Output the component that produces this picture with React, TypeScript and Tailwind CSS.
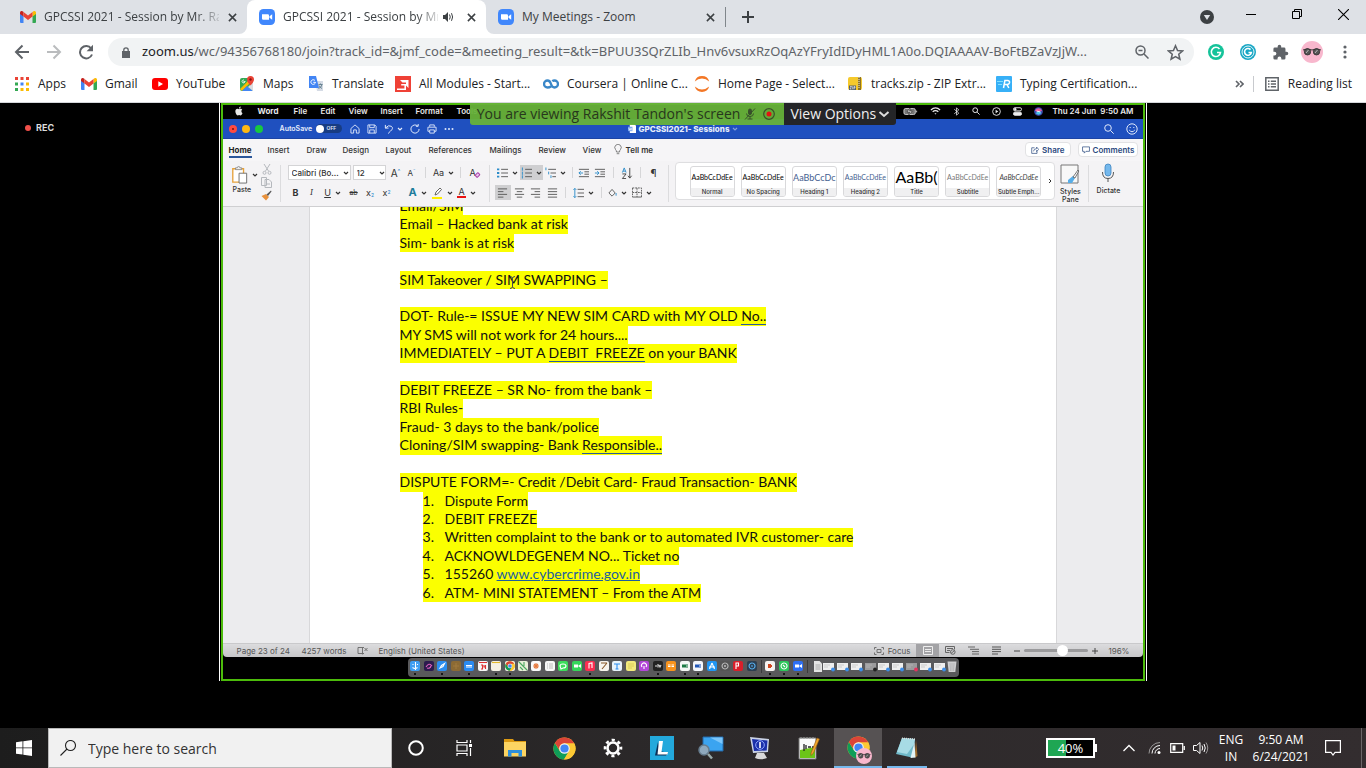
import React from "react";

type P = { children?: React.ReactNode; className?: string };

/* ---------- shared drawings ---------- */

const Gmail = ({ className = "" }: P) => (
  <svg viewBox="0 0 16 12" className={className}>
    <path d="M0 2v9a1 1 0 0 0 1 1h2.500V5z" fill="#4285f4" />
    <path d="M16 2v9a1 1 0 0 1-1 1h-2.500V5z" fill="#34a853" />
    <path d="M12.500 1v4.500L16 3V1.700C16 0 14.200-.5 13 .5z" fill="#fbbc04" />
    <path d="M0 1.700V3l3.500 2.500V1L3 .5C1.800-.5 0 0 0 1.700z" fill="#c5221f" />
    <path d="M3.500 1v4.500L8 9l4.500-3.500V1L8 4.400z" fill="#ea4335" />
  </svg>
);

const ZoomLogo = ({ className = "" }: P) => (
  <svg viewBox="0 0 16 16" className={className}>
    <rect width="16" height="16" rx="4.500" fill="#4087fc" />
    <path d="M3 5.200h5.800a1.200 1.200 0 0 1 1.200 1.200v4.400H4.200A1.200 1.200 0 0 1 3 9.600zM10.500 7.200l2.700-1.900v5.400l-2.700-1.900z" fill="#fff" />
  </svg>
);

const Close = ({ className = "" }: P) => (
  <svg viewBox="0 0 10 10" className={className} stroke="#3c4043" strokeWidth="1.700">
    <path d="M1 1l8 8M9 1l-8 8" />
  </svg>
);

const Chrome = ({ className = "" }: P) => (
  <svg viewBox="0 0 24 24" className={className}>
    <circle cx="12" cy="12" r="11.500" fill="#fbc02d" />
    <path d="M2 6.200A11.500 11.500 0 0 0 11.500 23.500L16.800 14.500 12 12 7.200 14.800z" fill="#0f9d58" />
    <path d="M22 6.300H12v5.700l4.800 2.700-5.300 8.800A11.500 11.500 0 0 0 22 6.300z" fill="#fcc934" />
    <path d="M2 6.200A11.500 11.500 0 0 1 22 6.500H12A5.500 5.500 0 0 0 6.700 13.500z" fill="#db4437" />
    <circle cx="12" cy="12" r="5.500" fill="#f1f1f1" />
    <circle cx="12" cy="12" r="4.300" fill="#4285f4" />
  </svg>
);

const Glasses = ({ className = "" }: P) => (
  <svg viewBox="0 0 22 22" className={className}>
    <circle cx="11" cy="11" r="11" fill="#f8b7cd" />
    <path d="M2 9q4-2 9 0 5-2 9 0" stroke="#333" fill="none" />
    <circle cx="6.500" cy="10.800" r="3.200" fill="#555" stroke="#222" strokeWidth=".7" />
    <circle cx="15.500" cy="10.800" r="3.200" fill="#555" stroke="#222" strokeWidth=".7" />
    <path d="M5 12l2.500-3M14 12l2.500-3" stroke="#bbb" strokeWidth="1" />
  </svg>
);

const Down = ({ className = "" }: P) => (
  <svg viewBox="0 0 6 6" className={`h-[6px] w-[6px] shrink-0 ${className}`} fill="none" stroke="currentColor" strokeWidth="1.200">
    <path d="M1 2l2 2 2-2" />
  </svg>
);

/* ---------- browser ---------- */

function Tab({ icon, title, active, audio, fade }: { icon: React.ReactNode; title: string; active?: boolean; audio?: boolean; fade?: boolean }) {
  return (
    <div className={`relative flex h-[34px] w-[239px] shrink-0 items-center pl-3 pr-[10px] ${active ? "rounded-t-lg bg-white" : ""}`}>
      {active && (
        <>
          <svg viewBox="0 0 8 8" className="absolute -left-2 bottom-0 h-2 w-2"><path d="M8 0v8H0a8 8 0 0 0 8-8z" fill="#fff" /></svg>
          <svg viewBox="0 0 8 8" className="absolute -right-2 bottom-0 h-2 w-2"><path d="M0 0v8h8a8 8 0 0 1-8-8z" fill="#fff" /></svg>
        </>
      )}
      {icon}
      <span className={`ml-2 min-w-0 flex-1 overflow-hidden whitespace-nowrap text-[12px] text-[#3c4043] ${fade ? "[mask-image:linear-gradient(to_right,#000_86%,#0003)]" : ""}`}>{title}</span>
      {audio && (
        <svg viewBox="0 0 12 12" className="ml-1 h-3 w-3 shrink-0" fill="#3c4043">
          <path d="M1 4h2l3-3v10L3 8H1z" />
          <path d="M7.500 3.500q1.500 2.500 0 5M9.500 2.200q2.200 3.800 0 7.600" stroke="#3c4043" fill="none" />
        </svg>
      )}
      <button aria-label="Close tab" className={`flex w-[10px] shrink-0 justify-center ${audio ? "ml-3" : "ml-2"}`}><Close className="h-[9px] w-[9px]" /></button>
    </div>
  );
}

function TabStrip() {
  return (
    <div className="flex h-[34px] shrink-0 items-center bg-[#dee1e6] pl-2">
      <Tab fade icon={<Gmail className="h-3 w-4 shrink-0" />} title="GPCSSI 2021 - Session by Mr. Rak" />
      <Tab fade active audio icon={<ZoomLogo className="h-4 w-4 shrink-0" />} title="GPCSSI 2021 - Session by Mr" />
      <Tab icon={<ZoomLogo className="h-4 w-4 shrink-0" />} title="My Meetings - Zoom" />
      <div className="h-5 w-px bg-[#80868b]" />
      <button aria-label="New tab" className="ml-4">
        <svg viewBox="0 0 12 12" className="h-3 w-3" stroke="#3c4043" strokeWidth="2"><path d="M6 0v12M0 6h12" /></svg>
      </button>
      <div className="flex-1" />
      <svg viewBox="0 0 14 14" className="mr-8 h-[14px] w-[14px]"><circle cx="7" cy="7" r="7" fill="#3c4043" /><path d="M3.800 5h6.400L7 10z" fill="#dee1e6" /></svg>
      <div className="mb-[6px] flex items-center gap-9 pr-[17px]">
        <button aria-label="Minimise"><svg viewBox="0 0 10 10" className="h-[10px] w-[10px]" stroke="#000"><path d="M0 5.500h10" /></svg></button>
        <button aria-label="Restore"><svg viewBox="0 0 10 10" className="h-[10px] w-[10px]" fill="none" stroke="#000"><path d="M.5 2.500h7v7h-7zM2.500 2.500v-2h7v7h-2" /></svg></button>
        <button aria-label="Close window"><svg viewBox="0 0 10 10" className="h-[11px] w-[11px]" stroke="#000"><path d="M0 0l10 10M10 0L0 10" /></svg></button>
      </div>
    </div>
  );
}

function Toolbar() {
  return (
    <div className="flex h-9 shrink-0 items-center bg-white pl-[14px] pr-[19px]">
      <button aria-label="Back" className="w-8">
        <svg viewBox="0 0 16 16" className="h-4 w-4" fill="none" stroke="#5f6368" strokeWidth="2"><path d="M15 8H2M8.500 1.500L2 8l6.500 6.500" /></svg>
      </button>
      <button aria-label="Forward" className="w-8">
        <svg viewBox="0 0 16 16" className="h-4 w-4" fill="none" stroke="#babcbe" strokeWidth="2"><path d="M1 8h13M7.500 1.500L14 8l-6.500 6.500" /></svg>
      </button>
      <button aria-label="Reload" className="w-[30px]">
        <svg viewBox="0 0 16 16" className="h-4 w-4" fill="none" stroke="#5f6368" strokeWidth="2"><path d="M14 10.500A6.200 6.200 0 1 1 13.200 4.500" /><path d="M15 .8v6.400H8.600z" fill="#5f6368" stroke="none" /></svg>
      </button>
      <div className="flex h-7 min-w-0 flex-1 items-center rounded-full bg-[#f1f3f4] pl-[14px] pr-[10px]">
        <svg viewBox="0 0 8 11" className="h-[11px] w-2" fill="#5f6368"><path d="M0 4h8v7H0z" /><path d="M1.800 4.500V3a2.200 2.200 0 0 1 4.400 0v1.500" fill="none" stroke="#5f6368" strokeWidth="1.300" /></svg>
        <div className="ml-3 min-w-0 flex-1 overflow-hidden whitespace-nowrap font-['Noto_Sans',sans-serif] text-[13px] text-[#5f6368]">
          <span className="text-[#202124]">zoom.us</span>/wc/94356768180/join?track_id=&amp;jmf_code=&amp;meeting_result=&amp;tk=BPUU3SQrZLIb_Hnv6vsuxRzOqAzYFryIdIDyHML1A0o.DQIAAAAV-BoFtBZaVzJjW...
        </div>
        <svg viewBox="0 0 14 14" className="mr-[18px] h-[14px] w-[14px] shrink-0" fill="none" stroke="#5f6368" strokeWidth="1.500"><circle cx="5.500" cy="5.500" r="4.500" /><path d="M9 9l4.500 4.500M3.500 5.500h4" /></svg>
        <svg viewBox="0 0 24 24" className="h-[17px] w-[17px] shrink-0" fill="none" stroke="#5f6368" strokeWidth="2.200"><path d="M12 2.500l2.900 6.600 7.100.7-5.400 4.700 1.600 7-6.200-3.700-6.200 3.700 1.600-7L2 9.800l7.100-.7z" /></svg>
      </div>
      <div className="ml-[14px] flex items-center">
        <svg viewBox="0 0 16 16" className="h-4 w-4"><circle cx="8" cy="8" r="8" fill="#15c39a" /><path d="M11.500 5A4.600 4.600 0 1 0 12.500 8.500H9" fill="none" stroke="#fff" strokeWidth="1.600" /></svg>
        <svg viewBox="0 0 16 16" className="ml-4 h-4 w-4"><circle cx="8" cy="8" r="8" fill="#18a6c4" /><circle cx="8" cy="8" r="6" fill="none" stroke="#fff" strokeWidth=".9" /><path d="M10.500 5.600A3.400 3.400 0 1 0 11.300 8.500H8.500" fill="none" stroke="#fff" strokeWidth="1.600" /></svg>
        <svg viewBox="0 0 24 24" className="ml-4 h-[17px] w-[17px]" fill="#5f6368"><path d="M20.500 11H19V7a2 2 0 0 0-2-2h-4V3.500a2.500 2.500 0 0 0-5 0V5H4a2 2 0 0 0-2 2v3.800h1.500a2.700 2.700 0 0 1 0 5.400H2V20a2 2 0 0 0 2 2h3.800v-1.500a2.700 2.700 0 0 1 5.400 0V22H17a2 2 0 0 0 2-2v-4h1.500a2.500 2.500 0 0 0 0-5z" /></svg>
        <Glasses className="ml-3 h-[22px] w-[22px]" />
        <svg viewBox="0 0 4 14" className="ml-5 h-[14px] w-1" fill="#5f6368"><circle cx="2" cy="2" r="1.600" /><circle cx="2" cy="7" r="1.600" /><circle cx="2" cy="12" r="1.600" /></svg>
      </div>
    </div>
  );
}

const bookmarks: { label: string; w: string; icon: React.ReactNode }[] = [
  { label: "Apps", w: "w-[67px]", icon: (
    <svg viewBox="0 0 16 16" className="h-4 w-4"><path d="M1 1h3v3H1zM6.500 1h3v3h-3zM12 1h3v3h-3z" fill="#ea4335" /><path d="M1 6.500h3v3H1z" fill="#34a853" /><path d="M6.500 6.500h3v3h-3z" fill="#4285f4" /><path d="M12 6.500h3v3h-3zM6.500 12h3v3h-3zM12 12h3v3h-3z" fill="#fbbc04" /><path d="M1 12h3v3H1z" fill="#34a853" /></svg>) },
  { label: "Gmail", w: "w-[71px]", icon: <Gmail className="h-3 w-4" /> },
  { label: "YouTube", w: "w-[87px]", icon: (
    <svg viewBox="0 0 16 12" className="h-3 w-4"><rect width="16" height="12" rx="3" fill="#f00" /><path d="M6.300 3.300v5.400L11 6z" fill="#fff" /></svg>) },
  { label: "Maps", w: "w-[69px]", icon: (
    <svg viewBox="0 0 16 16" className="h-4 w-4"><rect x="1" y="2" width="13" height="13" rx="2" fill="#34a853" /><path d="M1 13L12 2h2v2L3 15z" fill="#fbbc04" /><path d="M3 15l5-5 6 5z" fill="#4285f4" /><path d="M9 11l5-5v9z" fill="#dadce0" /><path d="M11.500 0A3.500 3.500 0 0 1 15 3.500C15 6 11.500 9.500 11.500 9.500S8 6 8 3.500A3.500 3.500 0 0 1 11.500 0z" fill="#ea4335" /><circle cx="11.500" cy="3.500" r="1.200" fill="#811" /><path d="M6.500 5.500H4.800v1h.8A1.500 1.500 0 1 1 5 4" stroke="#fff" fill="none" strokeWidth=".8" /></svg>) },
  { label: "Translate", w: "w-[87px]", icon: (
    <svg viewBox="0 0 16 16" className="h-4 w-4"><path d="M7 5h8v10H9z" fill="#d5dbe5" /><path d="M1 0h7l3 12H1z" fill="#4285f4" /><path d="M7 4.600A2.300 2.300 0 1 0 7.500 6.300H5.300" stroke="#fff" fill="none" /><path d="M10.500 8.500h4M12.500 7.500v1M14 8.500q-.5 3-3.500 4M11 9.500q1 2 3 3" stroke="#607d8b" fill="none" strokeWidth=".9" /></svg>) },
  { label: "All Modules - Start...", w: "w-[148px]", icon: (
    <svg viewBox="0 0 16 16" className="h-4 w-4"><path d="M0 0h16v16H0z" fill="#ef4136" /><path d="M2 13.200h8.200V8.800H6.200" fill="none" stroke="#fff" strokeWidth="1.600" /><path d="M5 4h8.500v8L11 9.500V6.500H7.500z" fill="#fff" /></svg>) },
  { label: "Coursera | Online C...", w: "w-[151px]", icon: (
    <svg viewBox="0 0 16 10" className="h-[10px] w-4" fill="none" stroke="#3a87c8" strokeWidth="2.300"><path d="M8 7.500Q6.500 8.500 4.500 8.500a3.500 3.500 0 1 1 0-7Q7 1.500 8 5t3.500 3.500a3.500 3.500 0 1 0 0-7Q10 1.500 9.300 2.200" /></svg>) },
  { label: "Home Page - Select...", w: "w-[153px]", icon: (
    <svg viewBox="0 0 16 16" className="h-4 w-4" fill="#f37726"><path d="M.8 5.500a7.500 7.500 0 0 1 14.400 0Q12 2.600 8 2.600T.8 5.500zM.8 10.500a7.500 7.500 0 0 0 14.400 0Q12 13.400 8 13.400T.8 10.500z" /></svg>) },
  { label: "tracks.zip - ZIP Extr...", w: "w-[149px]", icon: (
    <svg viewBox="0 0 16 16" className="h-4 w-4"><rect x="1" y="1" width="14" height="13" rx="2" fill="#f5c92c" /><path d="M11 1h3v13h-3z" fill="#8d7425" /><path d="M12 1v11" stroke="#eee" strokeDasharray="1 1" /><path d="M2 9.500h7v4.500H2z" fill="#54606b" /><path d="M3 10.500h1.500L3 13h1.500M5.700 10.300v3M7 13.300v-2.700h1v1.300H7" stroke="#fff" strokeWidth=".6" fill="none" /></svg>) },
  { label: "Typing Certification...", w: "w-[150px]", icon: (
    <svg viewBox="0 0 16 16" className="h-4 w-4"><rect width="16" height="16" rx="1" fill="#37b0f7" /><path d="M1 5.500h6M2 8.500h4" stroke="#7fe0ff" /><path d="M7.500 12l1.400-7.500h3q2 .4 1.600 2.200-.5 1.800-2.600 1.900H8.500M11 8.500l1.800 3.500" fill="none" stroke="#fff" strokeWidth="1.500" /></svg>) },
];

function Bookmarks() {
  return (
    <nav className="flex h-[33px] shrink-0 items-center border-b border-[#d5d7db] bg-white px-[14px] pb-1 text-[12px] text-[#202124]">
      {bookmarks.map((b) => (
        <a key={b.label} href="#" className={`flex shrink-0 items-center gap-2 whitespace-nowrap ${b.w}`}>
          {b.icon}
          <span>{b.label}</span>
        </a>
      ))}
      <div className="flex-1" />
      <svg viewBox="0 0 9 8" className="h-2 w-[9px]" fill="none" stroke="#5f6368" strokeWidth="1.600"><path d="M1 1l3 3-3 3M5 1l3 3-3 3" /></svg>
      <div className="ml-[9px] h-4 w-px bg-[#c8cace]" />
      <button className="ml-[11px] flex items-center gap-[9px]">
        <svg viewBox="0 0 14 14" className="h-[14px] w-[14px]" fill="none" stroke="#5f6368" strokeWidth="1.500"><path d="M.8.8h12.400v12.400H.8z" /><path d="M3 4.200h1.500M3 7h1.500M3 9.800h1.500M5.800 4.200H11M5.800 7H11M5.800 9.800H11" /></svg>
        <span className="whitespace-nowrap">Reading list</span>
      </button>
    </nav>
  );
}

/* ---------- shared Mac screen ---------- */

const macMenus: [string, string][] = [
  ["Word", "w-9 font-bold"], ["File", "w-[27px]"], ["Edit", "w-7"], ["View", "w-8"], ["Insert", "w-[35px]"], ["Format", "w-[41px]"], ["Tools", "w-9"],
];

function MacMenuBar() {
  return (
    <div className="flex h-[14px] items-center bg-black pl-3 pr-[10px] pb-[2px] text-[8px] font-semibold leading-none text-[#e8e8e8]">
      <svg viewBox="0 0 24 24" className="mr-[14px] h-[10px] w-[9px]" fill="#e8e8e8"><path d="M17 12.600c0-3 2.400-4.300 2.500-4.400-1.400-2-3.500-2.300-4.300-2.300-1.800-.2-3.500 1.100-4.500 1.100-.9 0-2.300-1-3.900-1-2 0-3.800 1.100-4.900 2.900-2 3.600-.5 9 1.500 11.900 1 1.400 2.200 3 3.700 3 1.500-.1 2.100-1 3.900-1 1.800 0 2.300 1 3.900.9 1.600 0 2.600-1.400 3.600-2.900 1.100-1.600 1.600-3.200 1.600-3.300 0 0-3.100-1.200-3.100-4.900zM14 3.900c.8-1 1.400-2.400 1.200-3.800-1.200 0-2.600.8-3.500 1.800-.7.900-1.400 2.300-1.200 3.600 1.300.1 2.700-.7 3.500-1.600z" /></svg>
      {macMenus.map(([m, w]) => <span key={m} className={`shrink-0 whitespace-nowrap ${w}`}>{m}</span>)}
      <div className="flex-1" />
      <div className="mr-[10px] flex items-center gap-3">
        <svg viewBox="0 0 16 8" className="h-[7px] w-[15px]"><rect x=".5" y=".5" width="13" height="7" rx="2" fill="#777" stroke="#ddd" /><path d="M7.500 0L4 4.500h3L6 8l4-4.500H7z" fill="#fff" stroke="#222" strokeWidth=".7" /><path d="M15 3v2" stroke="#ddd" /></svg>
        <svg viewBox="0 0 12 9" className="h-[8px] w-[11px]" fill="none" stroke="#eee" strokeWidth="1.400"><path d="M.8 3.300Q6-1.300 11.200 3.300M2.800 5.400q3.200-2.600 6.400 0" /><path d="M4.800 7.300q1.200-.8 2.400 0L6 8.500z" fill="#eee" stroke="none" /></svg>
        <svg viewBox="0 0 8 12" className="h-[9px] w-[7px]" fill="none" stroke="#eee"><path d="M1 3l6 5-3 3V1l3 3-6 5" /></svg>
        <svg viewBox="0 0 10 10" className="h-2 w-2" fill="none" stroke="#eee" strokeWidth="1.200"><circle cx="4" cy="4" r="3" /><path d="M6.500 6.500L9.500 9.500" /></svg>
        <svg viewBox="0 0 10 10" className="h-[9px] w-[9px]" fill="none" stroke="#eee"><circle cx="5" cy="5" r="4.300" /><path d="M4 3v4l3-2z" fill="#eee" stroke="none" /></svg>
        <svg viewBox="0 0 10 10" className="h-[9px] w-[9px]" stroke="#eee"><rect x=".5" y=".8" width="9" height="3.500" rx="1.700" fill="none" /><rect x=".5" y="5.700" width="9" height="3.500" rx="1.700" fill="#eee" /><circle cx="2.500" cy="2.500" r="1" fill="#eee" /></svg>
        <svg viewBox="0 0 10 10" className="h-[9px] w-[9px]"><circle cx="5" cy="5" r="4.800" fill="#3f4fb5" /><path d="M1 4q4-5 8 0-4 3-8 0z" fill="#e75c9b" /><path d="M2 7q4-5 6 0-3 3-6 0z" fill="#4ac8e8" /><path d="M3 4.500l4 1" stroke="#fff" /></svg>
      </div>
      <span className="whitespace-pre">Thu 24 Jun  9:50 AM</span>
    </div>
  );
}

function WordTitleBar() {
  return (
    <div className="grid h-5 grid-cols-[1fr_auto_1fr] items-center border-b border-[#1c44a5] bg-[#1f50bf] text-[8px] leading-none text-[#e6edfb]">
      <div className="flex items-center pl-[6px]">
        <span className="flex h-2 w-2 items-center justify-center rounded-full bg-[#ff4a40]"><span className="h-[2px] w-[2px] rounded-full bg-[#7c100a]" /></span>
        <span className="ml-[5px] h-2 w-2 rounded-full bg-[#fdb814]" />
        <span className="ml-[5px] h-2 w-2 rounded-full bg-[#18c83f]" />
        <span className="ml-[17px] w-9 text-[7px] font-semibold">AutoSave</span>
        <span className="flex h-[9px] w-[26px] items-center gap-[3px] rounded-full bg-[#183c82] text-[5px] font-semibold"><span className="h-2 w-2 rounded-full bg-white" />OFF</span>
        <div className="ml-2 flex items-center gap-[7px]">
          <svg viewBox="0 0 11 11" className="h-[10px] w-[10px]" fill="none" stroke="#dfe8fb"><path d="M1 5L5.500 1 10 5v5H7V6.500H4V10H1z" /></svg>
          <svg viewBox="0 0 11 11" className="h-[10px] w-[10px]" fill="none" stroke="#dfe8fb"><path d="M1 1h7.500L10 2.500V10H1zM3 1v3h5V1M3 10V6.500h5V10" /></svg>
          <svg viewBox="0 0 11 11" className="h-[10px] w-[10px]" fill="none" stroke="#dfe8fb" strokeWidth="1.100"><path d="M1.500 1v3.500H5M1.500 4.500Q5 .5 8 2.500T7 8L4.500 10.500" /></svg>
          <Down className="-ml-[4px]" />
          <svg viewBox="0 0 11 11" className="h-[10px] w-[10px]" fill="none" stroke="#dfe8fb" strokeWidth="1.100"><path d="M10 5.500a4.500 4.500 0 1 1-1.500-3.300M6.500 2.500H9V0" /></svg>
          <svg viewBox="0 0 11 11" className="h-[10px] w-[10px]" fill="none" stroke="#dfe8fb"><path d="M3 3V1h5v2M3 8H1V3.500h9V8H8M3 6.500h5V10H3z" /></svg>
          <svg viewBox="0 0 10 4" className="h-1 w-[10px]" fill="#dfe8fb"><circle cx="1.500" cy="2" r="1" /><circle cx="5" cy="2" r="1" /><circle cx="8.500" cy="2" r="1" /></svg>
        </div>
      </div>
      <div className="flex items-center gap-[3px] font-extrabold">
        <svg viewBox="0 0 9 10" className="h-[9px] w-2"><path d="M2 0h5l2 2v8H2z" fill="#fff" /><path d="M0 3h5v5H0z" fill="#7ba7ef" /><path d="M1 4.500l.8 2.500.8-2 .8 2L4 4.500" stroke="#fff" fill="none" strokeWidth=".7" /></svg>
        <span>GPCSSI2021- Sessions</span>
        <Down className="opacity-50" />
      </div>
      <div className="flex items-center justify-end gap-3 pr-[5px]">
        <svg viewBox="0 0 10 10" className="h-[10px] w-[10px]" fill="none" stroke="#dfe8fb"><circle cx="4" cy="4" r="3.300" /><path d="M6.500 6.500L9.700 9.700" /></svg>
        <svg viewBox="0 0 12 12" className="h-3 w-3" fill="none" stroke="#dfe8fb"><circle cx="6" cy="6" r="5.200" /><path d="M3.200 7q2.800 3.500 5.600 0M4.200 4v1M7.800 4v1" /></svg>
      </div>
    </div>
  );
}

const wordTabs: [string, string][] = [
  ["Insert", "w-[39px]"], ["Draw", "w-9"], ["Design", "w-[43px]"], ["Layout", "w-[43px]"], ["References", "w-[61px]"], ["Mailings", "w-[49px]"], ["Review", "w-11"], ["View", "w-[31px]"],
];

function WordTabs() {
  return (
    <div className="flex h-[22px] items-center bg-[#f6f5f7] pl-[6px] pr-[5px] pb-px text-[8px] font-medium leading-none text-[#333]">
      <div className="w-[39px]"><button className="block border-b-2 border-[#2b579a] pb-[2px] pt-1 font-bold text-[#222]">Home</button></div>
      {wordTabs.map(([t, w]) => <button key={t} className={`shrink-0 text-left ${w}`}>{t}</button>)}
      <button className="flex items-center gap-1 font-semibold">
        <svg viewBox="0 0 8 11" className="h-[11px] w-2" fill="none" stroke="#666" strokeWidth=".8"><path d="M2.500 8Q2.500 6.500 1.500 5.500a3.200 3.200 0 1 1 5 0Q5.500 6.500 5.500 8zM2.700 9.700h2.600" /></svg>
        Tell me
      </button>
      <div className="flex-1" />
      <button className="mr-[7px] flex h-[15px] items-center gap-[3px] rounded-sm border border-[#e2e2e4] bg-white px-[5px] font-semibold text-[#2c4a80]">
        <svg viewBox="0 0 9 9" className="h-2 w-2" fill="none" stroke="#2c4a80" strokeWidth=".8"><path d="M4 2H.8v6.300h6V6M2.800 6q.3-3 3.500-3V1.200l2.300 2.600-2.300 2.500V4.600" /></svg>
        Share
      </button>
      <button className="flex h-[15px] items-center gap-[3px] rounded-sm border border-[#e2e2e4] bg-white px-[3px] font-semibold text-[#2c4a80]">
        <svg viewBox="0 0 9 9" className="h-2 w-2" fill="none" stroke="#2c4a80" strokeWidth=".8"><path d="M.6 1h7.800v5H4.500L2.500 8V6H.6z" /></svg>
        Comments
      </button>
    </div>
  );
}

const Cell = ({ children, className = "" }: P) => (
  <button className={`flex h-[15px] shrink-0 items-center justify-center gap-[4px] leading-none ${className}`}>{children}</button>
);
const Sep = ({ className = "" }: P) => (
  <span className={`flex shrink-0 justify-center ${className}`}><span className="h-[11px] w-px bg-[#d6d6d8]" /></span>
);
const Lines = ({ d }: { d: string }) => (
  <svg viewBox="0 0 12 12" className="h-3 w-[11px]" fill="none" stroke="#555" strokeWidth="1"><path d={d} /></svg>
);

const styleCards: [string, string, string][] = [
  ["AaBbCcDdEe", "Normal", "text-[7px] text-black"],
  ["AaBbCcDdEe", "No Spacing", "text-[7px] text-black"],
  ["AaBbCcDc", "Heading 1", "text-[9px] text-[#44608f]"],
  ["AaBbCcDdEe", "Heading 2", "text-[7px] text-[#44608f]"],
  ["AaBb(", "Title", "text-[16px] text-black"],
  ["AaBbCcDdEe", "Subtitle", "text-[7px] text-[#777]"],
  ["AaBbCcDdEe", "Subtle Emph...", "text-[7px] italic text-[#444]"],
];

function Ribbon() {
  return (
    <div className="flex h-[46px] items-start border-b border-[#cfcfd1] bg-[#f4f3f5] pl-2 pr-[22px] text-[7px] text-[#333]">
      <div className="mt-1 w-[27px] shrink-0">
        <div className="flex items-center gap-1">
          <svg viewBox="0 0 19 20" className="h-5 w-[19px]"><path d="M2 3h12v15H2z" fill="#fff" stroke="#e6a23c" strokeWidth="1.500" /><path d="M5 4V2h2a1.500 1.500 0 0 1 3 0h2v2z" fill="#eee" stroke="#777" strokeWidth=".8" /><path d="M9 8h8.500v11H9z" fill="#fff" stroke="#666" /></svg>
          <Down />
        </div>
        <div className="mt-[1px] pl-[2px] font-medium leading-[8px]">Paste</div>
      </div>
      <div className="mt-[3px] flex w-[22px] shrink-0 flex-col items-center gap-[2px] pr-1">
        <svg viewBox="0 0 10 11" className="h-[11px] w-[10px]" fill="none" stroke="#b5b8bd"><path d="M2 0l4.500 7M8 0L3.500 7" /><circle cx="2.500" cy="8.800" r="1.500" /><circle cx="7.500" cy="8.800" r="1.500" /></svg>
        <svg viewBox="0 0 11 11" className="h-[11px] w-[11px]" fill="#f4f3f5" stroke="#b5b8bd"><path d="M.5.500h5v8h-5zM4 2.500h4l2.500 2.500v5.500H4z" /><path d="M5.500 7h3.500" /></svg>
        <svg viewBox="0 0 11 11" className="h-[11px] w-[11px]"><path d="M5 4l3 3-3 3.500L.5 6z" fill="#e8913c" /><path d="M5.500 4.500L10 .5l.5 1L7 6z" fill="#555" /></svg>
      </div>
      <div className="mt-1 h-[37px] w-px shrink-0 bg-[#dcdcde]" />
      <div className="ml-[7px] mt-1 flex shrink-0 flex-col gap-[5px]">
        <div className="flex items-center">
          <label className="relative mr-[2px] flex items-center">
            <select aria-label="Font" className="h-[15px] w-[63px] appearance-none border border-[#d4d4d6] bg-white pl-[3px] text-[8px] font-medium text-[#333]"><option>Calibri (Bo...</option></select>
            <Down className="pointer-events-none absolute right-[2px]" />
          </label>
          <label className="relative flex items-center">
            <select aria-label="Font size" className="h-[15px] w-[33px] appearance-none border border-[#d4d4d6] bg-white pl-[3px] text-[8px] font-medium text-[#333]"><option>12</option></select>
            <Down className="pointer-events-none absolute right-[1px]" />
          </label>
          <Cell className="ml-[2px] w-4 text-[10px]"><span className="flex">A<i className="text-[6px] not-italic text-[#1f86c9]">^</i></span></Cell>
          <Cell className="w-4 text-[8px]"><span className="flex">A<i className="text-[6px] not-italic text-[#1f86c9]">ˇ</i></span></Cell>
          <Sep className="w-3" />
          <Cell className="w-6 text-[9px]">Aa<Down /></Cell>
          <Sep className="w-[9px]" />
          <Cell className="w-4 text-[9px]"><span className="relative">A<i className="absolute -right-[4px] bottom-0 h-[4px] w-[5px] -rotate-45 rounded-[1px] border border-[#a83ca8] bg-[#e9c6ec]" /></span></Cell>
        </div>
        <div className="flex items-center text-[9px]">
          <Cell className="w-4 font-bold">B</Cell>
          <Cell className="w-4 font-serif italic">I</Cell>
          <Cell className="w-[26px]"><span className="underline">U</span><Down /></Cell>
          <Cell className="w-4 text-[7px]"><s>ab</s></Cell>
          <Cell className="w-[17px]"><span>x<sub className="text-[5px] text-[#1f86c9]">2</sub></span></Cell>
          <Cell className="w-4"><span>x<sup className="text-[5px] text-[#1f86c9]">2</sup></span></Cell>
          <Cell className="ml-[11px] w-6 text-[11px] font-bold text-[#1c7c9c]">A<Down className="text-[#333]" /></Cell>
          <Cell className="w-[25px]">
            <svg viewBox="0 0 11 12" className="h-3 w-[11px]"><path d="M3 8l1-3 4-4 1.500 1.500-4 4.500z" fill="#fff" stroke="#555" strokeWidth=".9" /><path d="M0 10h10v2H0z" fill="#ffee00" /></svg><Down />
          </Cell>
          <Cell className="w-6"><span className="border-b-2 border-[#e81212] px-[1px] leading-[9px]">A</span><Down /></Cell>
        </div>
      </div>
      <div className="ml-2 mt-1 h-[37px] w-px shrink-0 bg-[#dcdcde]" />
      <div className="ml-[5px] mt-1 flex shrink-0 flex-col gap-[5px]">
        <div className="flex items-center">
          <Cell className="w-[25px]">
            <svg viewBox="0 0 12 12" className="h-3 w-[11px]"><path d="M4.500 2H12M4.500 6H12M4.500 10H12" stroke="#555" /><path d="M0 1h2.500v2H0zM0 5h2.500v2H0zM0 9h2.500v2H0z" fill="#2b8cc9" /></svg><Down />
          </Cell>
          <Cell className="w-[23px] bg-[#cfcfd1]">
            <svg viewBox="0 0 12 12" className="h-3 w-[11px]"><path d="M4.500 2H12M4.500 6H12M4.500 10H12" stroke="#555" /><path d="M1.500 0v3.500M1.500 4.500V8M1.500 8.500V12" stroke="#2b8cc9" /></svg><Down />
          </Cell>
          <Cell className="w-[26px]">
            <svg viewBox="0 0 12 12" className="h-3 w-[11px]"><path d="M3.500 2H12M6 6h6M8 10h4" stroke="#555" /><path d="M1 0v3M4 4.500v3M6.500 8.500v3" stroke="#2b8cc9" /></svg><Down />
          </Cell>
          <Sep className="w-[7px]" />
          <Cell className="w-4"><svg viewBox="0 0 12 12" className="h-3 w-[11px]"><path d="M1 2h11M7 4.700h5M7 7.300h5M1 10h11" stroke="#555" /><path d="M5.500 6H1M3 4L1 6l2 2" stroke="#2b8cc9" fill="none" /></svg></Cell>
          <Cell className="w-4"><svg viewBox="0 0 12 12" className="h-3 w-[11px]"><path d="M1 2h11M7 4.700h5M7 7.300h5M1 10h11" stroke="#555" /><path d="M1 6h4.500M3.500 4l2 2-2 2" stroke="#2b8cc9" fill="none" /></svg></Cell>
          <Sep className="w-[11px]" />
          <Cell className="w-4"><svg viewBox="0 0 12 13" className="h-3 w-3" fill="none"><path d="M1 6L3 1l2 5M1.700 4.500h2.600" stroke="#2b8cc9" /><path d="M1 7.500h4l-4 5h4M9 1v11M7 9.500L9 12l2-2.500" stroke="#444" /></svg></Cell>
          <Sep className="w-[11px]" />
          <Cell className="w-4 text-[10px]">¶</Cell>
        </div>
        <div className="flex items-center">
          <Cell className="w-4 bg-[#cfcfd1]"><Lines d="M1 1.500h10M1 4.500h6M1 7.500h10M1 10.500h6" /></Cell>
          <Cell className="w-[17px]"><Lines d="M1 1.500h10M3 4.500h6M1 7.500h10M3 10.500h6" /></Cell>
          <Cell className="w-4"><Lines d="M1 1.500h10M5 4.500h6M1 7.500h10M5 10.500h6" /></Cell>
          <Cell className="w-[17px]"><Lines d="M1 1.500h10M1 4.500h10M1 7.500h10M1 10.500h10" /></Cell>
          <Sep className="w-[10px]" />
          <Cell className="w-[26px]">
            <svg viewBox="0 0 12 12" className="h-3 w-[11px]" fill="none"><path d="M5 2h7M5 6h7M5 10h7" stroke="#555" /><path d="M2 1v10M.5 2.500L2 1l1.500 1.500M.5 9.500L2 11l1.500-1.500" stroke="#2b8cc9" /></svg><Down />
          </Cell>
          <Sep className="w-[9px]" />
          <Cell className="w-6"><svg viewBox="0 0 10 10" className="h-[10px] w-[9px]" fill="none" stroke="#555"><path d="M4.500 1L8 5 4.500 8.500 1 5z" /><path d="M9 5v3" stroke="#2b8cc9" /></svg><Down /></Cell>
          <Cell className="w-[25px]"><svg viewBox="0 0 11 11" className="h-[11px] w-[10px]" fill="none" stroke="#555"><path d="M.5.500h10v10M.5.500v10M5.500.500v10M.5 5.500h10" strokeDasharray="2 1" /><path d="M.5 10.500h10" /></svg><Down /></Cell>
        </div>
      </div>
      <div className="ml-[6px] mt-1 h-[37px] w-px shrink-0 bg-[#dcdcde]" />
      <div className="ml-[6px] mt-[1px] flex h-[38px] min-w-0 flex-1 items-center justify-between rounded-sm border border-[#dedee0] bg-white pl-[14px] pr-[1px]">
        {styleCards.map(([sample, name, cls]) => (
          <button key={name} className="flex h-[31px] w-[45px] shrink-0 flex-col overflow-hidden rounded-[3px] border border-[#d9d9db] bg-white leading-none">
            <span className={`flex h-[21px] w-full items-center justify-center whitespace-nowrap font-['Lato',sans-serif] ${cls}`}>{sample}</span>
            <span className="flex h-2 w-full items-center justify-center whitespace-nowrap bg-[#f0f0f1] text-[6px] font-medium text-[#333]">{name}</span>
          </button>
        ))}
        <svg viewBox="0 0 6 6" className="h-[6px] w-[6px]" fill="none" stroke="#333"><path d="M2 1l2 2-2 2" /></svg>
      </div>
      <button className="ml-[2px] mt-[3px] flex w-[26px] shrink-0 flex-col items-center font-medium leading-[8px]">
        <svg viewBox="0 0 20 20" className="mb-1 h-5 w-5"><path d="M1 1h17v18H1z" fill="#f8f8f8" stroke="#777" /><path d="M8 19v-3l5-4 2 2-3 5z" fill="#58aee8" /><path d="M13 13l5-7 .8 1L15 14z" fill="#fff" stroke="#555" strokeWidth=".8" /></svg>
        Styles<br />Pane
      </button>
      <div className="ml-[5px] mt-1 h-[37px] w-px shrink-0 bg-[#dcdcde]" />
      <button className="ml-[6px] mt-[2px] flex w-[26px] shrink-0 flex-col items-center font-medium leading-[8px]">
        <svg viewBox="0 0 14 20" className="mb-1 h-5 w-[14px]" fill="none"><rect x="4" y="1" width="6" height="12" rx="3" fill="#74b8ec" stroke="#3d84c2" strokeWidth=".8" /><path d="M1.500 9q0 6.500 5.500 6.500T12.500 9M7 15.500V19" stroke="#555" /></svg>
        Dictate
      </button>
    </div>
  );
}

const U = ({ children }: P) => <span className="border-b border-[#2a5a9a]">{children}</span>;

const docLines: React.ReactNode[] = [
  "Email/SIM",
  "Email – Hacked bank at risk",
  "Sim- bank is at risk",
  null,
  "SIM Takeover / SIM SWAPPING –",
  null,
  <>DOT- Rule-= ISSUE MY NEW SIM CARD with MY OLD <U>No..</U></>,
  "MY SMS will not work for 24 hours....",
  <>IMMEDIATELY – PUT A <U>DEBIT  FREEZE</U> on your BANK</>,
  null,
  "DEBIT FREEZE – SR No- from the bank –",
  "RBI Rules-",
  "Fraud- 3 days to the bank/police",
  <>Cloning/SIM swapping- Bank <U>Responsible..</U></>,
  null,
  "DISPUTE FORM=- Credit /Debit Card- Fraud Transaction- BANK",
];
const docList: React.ReactNode[] = [
  "Dispute Form",
  "DEBIT FREEZE",
  "Written complaint to the bank or to automated IVR customer- care",
  "ACKNOWLDEGENEM NO... Ticket no",
  <>155260 <a href="#" className="text-[#1c5f9e] underline">www.cybercrime.gov.in</a></>,
  "ATM- MINI STATEMENT – From the ATM",
];

function Document() {
  return (
    <div className="flex min-h-0 flex-1 bg-[#ececee] px-[86px]">
      <div className="relative flex min-w-0 flex-1 flex-col justify-end overflow-hidden border-x border-[#d8d8da] bg-white pb-[41px] pl-[90px]">
        <div className="grid h-[405px] shrink-0 grid-rows-[repeat(22,1fr)] whitespace-pre font-['Lato','Liberation_Sans',sans-serif] text-[14px] leading-[18px] text-[#111] [font-variant-ligatures:none]">
          {docLines.map((l, i) => (
            <p key={i} className="flex min-h-0">{l && <span className="bg-[#fbff00]">{l}</span>}</p>
          ))}
          {docList.map((l, i) => (
            <p key={`n${i}`} className="flex min-h-0 pl-[23px]"><span className="w-[22px] bg-[#fbff00]">{i + 1}.</span><span className="bg-[#fbff00]">{l}</span></p>
          ))}
        </div>
        <svg viewBox="0 0 7 13" className="absolute left-[199px] top-[69px] h-[13px] w-[7px]" fill="none" stroke="#445"><path d="M1 .5q2.500 0 2.500 2v8q0 2-2.500 2M6 .5q-2.500 0-2.500 2v8q0 2 2.500 2" /></svg>
      </div>
    </div>
  );
}

function StatusBar() {
  return (
    <div className="flex h-[14px] shrink-0 items-center rounded-b-[4px] border-t border-[#c9c9cb] bg-gradient-to-b from-[#dcdcde] to-[#c6c6c8] pl-[14px] pr-[14px] text-[8px] leading-none text-[#555]">
      <span className="w-[65px]">Page 23 of 24</span>
      <span className="w-[55px]">4257 words</span>
      <svg viewBox="0 0 11 9" className="mr-[11px] h-[9px] w-[11px]" fill="none" stroke="#666" strokeWidth=".9"><path d="M5 1.500H1v6h4l.5.800.5-.8h1M5.500 2v6M5 1.500h2M7.500 2l3 3M10.500 2l-3 3" /></svg>
      <span>English (United States)</span>
      <div className="flex-1" />
      <svg viewBox="0 0 10 8" className="h-2 w-[10px]" fill="none" stroke="#666" strokeWidth=".9"><path d="M.5 2.500v-2h2M7.500.500h2v2M9.500 5.500v2h-2M2.500 7.500h-2v-2M3 2.500h4v3H3z" /></svg>
      <span className="ml-1 mr-[6px]">Focus</span>
      <span className="flex h-full w-[23px] items-center justify-center bg-[#a3a3a6]"><svg viewBox="0 0 10 9" className="h-[9px] w-[10px]" fill="none" stroke="#eee"><path d="M.5.500h9v8h-9zM2 3.500h6M2 5.500h6" /></svg></span>
      <svg viewBox="0 0 11 9" className="ml-[6px] h-[9px] w-[11px]" fill="none" stroke="#666"><path d="M.5.500h9v3M.5.500v6h4M2 2.500h6M2 4.500h3" /><circle cx="7.800" cy="6" r="2.300" /><path d="M6 7.500l3.500-3" /></svg>
      <svg viewBox="0 0 11 9" className="ml-3 h-[9px] w-[11px]" stroke="#666"><path d="M0 1h7M2 3.300h9M4 5.600h7M4 8h7" /></svg>
      <svg viewBox="0 0 11 9" className="ml-3 h-[9px] w-[11px]" stroke="#555"><path d="M1 1h9M1 3.300h9M1 5.600h9M1 8h6" /></svg>
      <svg viewBox="0 0 6 6" className="ml-3 h-[6px] w-[6px]" stroke="#444"><path d="M0 3h6" /></svg>
      <input type="range" aria-label="Zoom" defaultValue={62} className="mx-1 h-[3px] w-16 appearance-none rounded bg-[#9a9a9c] [&::-webkit-slider-thumb]:h-[11px] [&::-webkit-slider-thumb]:w-[11px] [&::-webkit-slider-thumb]:appearance-none [&::-webkit-slider-thumb]:rounded-full [&::-webkit-slider-thumb]:bg-white" />
      <svg viewBox="0 0 6 6" className="h-[6px] w-[6px]" stroke="#444"><path d="M0 3h6M3 0v6" /></svg>
      <span className="ml-[10px]">196%</span>
    </div>
  );
}

const dockApps: { bg: string; d: string; fg: string; dot?: boolean }[] = [
  { bg: "#3f9df2", d: "M5.500 1v8M3 3v1M7.500 3v1M2.500 6.500q2.500 2 5 0", fg: "#fff", dot: true },
  { bg: "#2b1b4d", d: "M2 6q3-5 6-1M3 7q3 1 4-2", fg: "#e25fc0" },
  { bg: "#2b8df0", d: "M3 7l1.500-2.500L7.500 2.500 6 5.500z", fg: "#fff", dot: true },
  { bg: "#8c6a34", d: "M2 5h6M5 2v6", fg: "#a0793f" },
  { bg: "#2a8bf2", d: "M2 4.500h6M2 6h6", fg: "#fff", dot: true },
  { bg: "#f6f6f6", d: "M1 1.500h8M3 4h1.500v4H3M6 4v2h2M7.500 4v4", fg: "#d33" },
  { bg: "#f5f1e4", d: "M1 1.500h8", fg: "#e3b92c", dot: true },
  { bg: "chrome", d: "", fg: "", dot: true },
  { bg: "#e8efd9", d: "M1 1l8 8M6 1v4M2 6l3 3", fg: "#4aa860" },
  { bg: "#fafafa", d: "M5 2v6M2 5h6M3 3l4 4M7 3L3 7", fg: "#e5793e" },
  { bg: "#f8f8f8", d: "M2 3h1M4 3h4M2 5h1M4 5h4M2 7h1M4 7h4", fg: "#bbb" },
  { bg: "#3ddc5c", d: "M2 5q0-2 3-2t3 2-3 2L3 8z", fg: "#fff" },
  { bg: "#35d65a", d: "M2 4h4M2 5h4M2 6h4M7 5l1.500-1v2z", fg: "#fff" },
  { bg: "#fa2d50", d: "M4 7.500V2.500l3-.5v5", fg: "#fff", dot: true },
  { bg: "#f7f4ee", d: "M2 2h6M3 8l5-6", fg: "#8a5a2a" },
  { bg: "#e8f3fb", d: "M2 3h6M5 3v5M3.500 8h3", fg: "#2b8df0" },
  { bg: "#f2ea7c", d: "M2 3h6M2 5h6M2 7h4", fg: "#d9cb5a" },
  { bg: "#b347d9", d: "M5 5v3M3 6a2.500 2.500 0 1 1 4 0", fg: "#fff" },
  { bg: "#222", d: "M2 5h2M5 3v3.500M6 4l1 2 1-2", fg: "#ddd", dot: true },
  { bg: "#f8931d", d: "M2 4h2.500M2 5.500h2.500M5.500 4H8M5.500 5.500H8", fg: "#fff" },
  { bg: "#f4f6f4", d: "M2 4h4M2 5h4M2 6h4M7 3v4", fg: "#1d7a45", dot: true },
  { bg: "#f4f6fb", d: "M2 4h4M2 5h4M2 6h4M7 3v4", fg: "#2358b8", dot: true },
  { bg: "#2196f3", d: "M5 2L2.500 8M5 2l2.500 6M2 6h6", fg: "#fff" },
  { bg: "#555", d: "M5 2a3 3 0 1 0 .1 0M5 4v2M4 5h2", fg: "#bbb" },
  { bg: "#d91f2a", d: "M3 8V2h2.500v3H3", fg: "#fff" },
  { bg: "#2c3e50", d: "M5 2a3 3 0 1 0 .1 0M4 5h2", fg: "#5ab4f5" },
];
const dockRecent: typeof dockApps = [
  { bg: "#f6f2f0", d: "M3 3.500h3M3 4.500h4M3 5.500h4M3 6.500h3", fg: "#d0471f", dot: true },
  { bg: "#2cc75a", d: "M5 2a3 3 0 1 0 .1 0M4 4l2 2", fg: "#fff", dot: true },
  { bg: "#2d6ff5", d: "M2 4h4M2 5h4M2 6h4M7 5l1.500-1v2z", fg: "#fff", dot: true },
];

const DockIcon = ({ bg, d, fg, dot }: (typeof dockApps)[number]) => (
  <span className="relative flex w-[14px] justify-center">
    {bg === "chrome" ? (
      <span className="rounded-[2px] bg-[#f4f4f4]"><Chrome className="h-[10px] w-[10px]" /></span>
    ) : (
      <svg viewBox="0 0 10 10" className="h-[10px] w-[10px]"><rect width="10" height="10" rx="2" fill={bg} /><path d={d} stroke={fg} strokeWidth="1.100" fill="none" /></svg>
    )}
    {dot && <span className="absolute -bottom-[4px] h-[2px] w-[2px] rounded-full bg-black" />}
  </span>
);

const dockWindows = ["#3d8ee8", "#3d8ee8", "#3d8ee8", "#222", "#3d8ee8", "#3d8ee8", "#e5335f", "#3d8ee8", "#3d8ee8"];

function Dock() {
  return (
    <div className="flex h-[22px] shrink-0 items-start justify-center bg-black pt-[1px]">
      <div className="flex h-[19px] items-center rounded-[4px] bg-[#59595b] px-[1px] pb-[3px]">
        <div className="flex w-[350px] justify-between">{dockApps.map((a, i) => <DockIcon key={i} {...a} />)}</div>
        <span className="mx-[2px] h-[13px] w-px bg-[#3b3b3d]" />
        <div className="flex w-[41px] justify-between">{dockRecent.map((a, i) => <DockIcon key={i} {...a} />)}</div>
        <span className="mx-[2px] h-[13px] w-px bg-[#3b3b3d]" />
        <div className="flex w-[148px] items-center justify-between pl-1">
          <svg viewBox="0 0 8 11" className="h-[11px] w-2"><path d="M0 0h5.500L8 2.500V11H0z" fill="#e4e4e4" /><path d="M1.500 4h5M1.500 6h5M1.500 8h5" stroke="#aaa" /></svg>
          {dockWindows.map((c, i) => (
            <svg key={i} viewBox="0 0 12 11" className="h-[11px] w-3"><path d="M0 2h11v7H0z" fill={i === 3 || i === 6 ? "#9b9b9d" : "#eee"} /><path d="M1 4h6M1 6h4" stroke="#bbb" strokeWidth=".7" /><circle cx="10" cy="8.500" r="1.900" fill={c} /></svg>
          ))}
          <svg viewBox="0 0 10 11" className="h-[11px] w-[10px]"><path d="M.5.500h9L8.300 11H1.700z" fill="#cfcfd1" /><path d="M3 2l.5 8M5 2v8M7 2l-.5 8" stroke="#aeaeb0" strokeWidth=".7" /></svg>
        </div>
      </div>
    </div>
  );
}

function Meeting() {
  return (
    <main className="relative flex min-h-0 flex-1 flex-col bg-black pb-[47px] font-['Inter','Liberation_Sans',sans-serif]">
      <div className="absolute left-[25px] top-5 flex items-center gap-[5px] text-[9px] font-bold leading-[10px] text-[#dcdcdc]">
        <span className="h-[6px] w-[6px] rounded-full bg-[#f0504a]" />REC
      </div>
      <div className="mx-[16%] flex min-h-0 flex-1 flex-col border-x border-white px-px">
        <div className="flex min-h-0 flex-1 flex-col overflow-hidden border-2 border-[#4cbb0b] bg-black">
          <MacMenuBar />
          <WordTitleBar />
          <WordTabs />
          <Ribbon />
          <Document />
          <StatusBar />
          <Dock />
        </div>
      </div>
      <div className="absolute inset-x-0 top-0 flex justify-center font-['Open_Sans','Noto_Sans',sans-serif] text-[14px] leading-none">
        <div className="flex h-[22px] items-center whitespace-nowrap rounded-bl-[3px] bg-[#67b23a]/95 pl-[7px] pr-[9px] text-[#27371d]">
          You are viewing Rakshit Tandon's screen
          <svg viewBox="0 0 12 12" className="ml-1 h-3 w-3" fill="none" stroke="#38502b"><rect x="4.500" y="1" width="3" height="5.500" rx="1.500" fill="#38502b" /><path d="M2.500 5.500q0 3 3.500 3t3.500-3M6 8.500V11M3.500 11h5M1 11.500L11 .5" /></svg>
          <svg viewBox="0 0 12 12" className="ml-[7px] h-3 w-3"><circle cx="6" cy="6" r="5.300" fill="none" stroke="#38502b" strokeWidth="1.200" /><circle cx="6" cy="6" r="2.500" fill="#e31212" /></svg>
        </div>
        <button className="flex h-[22px] items-center gap-[2px] whitespace-nowrap rounded-br-[3px] bg-[#242528] px-[6px] text-[#f0f0f0]">
          View Options
          <svg viewBox="0 0 12 8" className="h-2 w-3" fill="none" stroke="#ddd" strokeWidth="2"><path d="M1.500 2L6 6l4.500-4" /></svg>
        </button>
      </div>
    </main>
  );
}

/* ---------- Windows taskbar ---------- */

const TaskBtn = ({ label, children, className = "" }: P & { label: string }) => (
  <button aria-label={label} className={`relative flex h-full w-12 shrink-0 items-center justify-center ${className}`}>{children}</button>
);

function Taskbar() {
  return (
    <footer className="flex h-10 shrink-0 items-center bg-gradient-to-r from-[#1d1d1d] via-[#2c292a] to-[#332d2f] text-[12px] text-white">
      <TaskBtn label="Start">
        <svg viewBox="0 0 16 16" className="h-4 w-4" fill="#fff"><path d="M0 2.200L6.500 1.300v6.200H0zM7.300 1.200L16 0v7.500H7.300zM0 8.300h6.500v6.300L0 13.700zM7.300 8.300H16V16l-8.700-1.200z" /></svg>
      </TaskBtn>
      <label className="flex h-full w-[344px] items-center border border-[#b9b9b9] bg-[#f1f1f1] pl-[11px]">
        <svg viewBox="0 0 16 16" className="h-4 w-4" fill="none" stroke="#222" strokeWidth="1.100"><circle cx="10.500" cy="5.500" r="5" /><path d="M7 9L.5 15.500" /></svg>
        <input aria-label="Search" placeholder="Type here to search" className="ml-3 min-w-0 flex-1 bg-transparent text-[14px] text-[#333] outline-none placeholder:text-[#333]" />
      </label>
      <TaskBtn label="Cortana"><svg viewBox="0 0 16 16" className="h-4 w-4" fill="none" stroke="#fff" strokeWidth="2"><circle cx="8" cy="8" r="6.800" /></svg></TaskBtn>
      <TaskBtn label="Task view"><svg viewBox="0 0 16 16" className="h-4 w-4" fill="none" stroke="#fff" strokeWidth="1.200"><path d="M1 0v2.500h10V0M1 16v-2.500h10V16M1 5h10v6H1zM14.500 0v3M14.500 8v8" /><path d="M13 4h3v3h-3z" fill="#fff" stroke="none" /></svg></TaskBtn>
      <div className="ml-[3px] flex h-full gap-[1px]">
        <TaskBtn label="File Explorer"><svg viewBox="0 0 22 20" className="h-5 w-[22px]"><path d="M0 1h9l1.500 2H22v4H0z" fill="#dd9a12" /><path d="M0 4h22v14.500H0z" fill="#fcd462" /><path d="M4 12h14v6.500h-3.500V15h-7v3.500H4z" fill="#2e8fdb" /></svg></TaskBtn>
        <TaskBtn label="Chrome"><Chrome className="h-[23px] w-[23px]" /></TaskBtn>
        <TaskBtn label="Settings"><svg viewBox="0 0 20 20" className="h-5 w-5"><circle cx="10" cy="10" r="5.500" fill="none" stroke="#fff" strokeWidth="2.600" /><circle cx="10" cy="10" r="8" fill="none" stroke="#fff" strokeWidth="2.600" strokeDasharray="3.140 3.140" strokeDashoffset="1.570" /></svg></TaskBtn>
        <TaskBtn label="Lens"><svg viewBox="0 0 24 24" className="h-6 w-6"><path d="M0 0h24v24H0z" fill="#23a9dc" /><path d="M8 6L5 19.500h11l2-2.500-8-2z" fill="#0d2f57" /><path d="M9 5h4l-1.500 11H18l-.5 2.500H7.500z" fill="#fff" /></svg></TaskBtn>
        <TaskBtn label="Magnifier"><svg viewBox="0 0 26 24" className="h-6 w-[26px]"><path d="M5 1h20v14H5z" fill="#3ba4f0" stroke="#2468a8" /><path d="M12 1.500h12.500V8z" fill="#7cc6fa" /><circle cx="6" cy="14" r="5" fill="#8fa9bd" stroke="#667c8d" strokeWidth="1.500" /><path d="M10 18l4 4.500" stroke="#9aa" strokeWidth="2.500" /></svg></TaskBtn>
        <TaskBtn label="Display info"><svg viewBox="0 0 22 24" className="h-6 w-[22px]"><path d="M1 1l19 2-1 13-15 1z" fill="#c9d2e6" /><path d="M3 3l15.500 1.500-.8 10L5 15z" fill="#1a2fa8" /><circle cx="11" cy="9" r="4.300" fill="none" stroke="#8fa6ff" /><path d="M11 6v6" stroke="#fff" strokeWidth="1.600" /><path d="M8 17h7l3 5q-6 2.500-12 0z" fill="#d9d9d9" /></svg></TaskBtn>
        <TaskBtn label="Notepad++"><svg viewBox="0 0 24 24" className="h-6 w-6"><path d="M2 2h17v21H2z" fill="#fafafa" stroke="#777" /><path d="M3 14l15-3v11H3z" fill="#6cc417" /><path d="M4 3V1M7 3V1M10 3V1M13 3V1M16 3V1" stroke="#999" /><path d="M7 15V8M9 9v4M11 11h3M15 11h2" stroke="#222" strokeWidth="1.300" /><path d="M14 17L20 2l2.500 1-6 14-2.500 2.500z" fill="#f0a52c" stroke="#8a5514" strokeWidth=".6" /></svg></TaskBtn>
        <TaskBtn label="Chrome window" className="border-b-2 border-[#76b9ed] bg-[#565253]">
          <Chrome className="h-[23px] w-[23px]" />
          <Glasses className="absolute bottom-[2px] right-[10px] h-4 w-4" />
        </TaskBtn>
        <TaskBtn label="Notepad" className="after:absolute after:inset-x-1 after:bottom-0 after:h-[2px] after:bg-[#76b9ed]"><svg viewBox="0 0 24 24" className="h-6 w-6"><path d="M21 4l1.500 16-3 2z" fill="#9c6b2e" /><path d="M7 2l13 1-3 18.500L1 18z" fill="#6fb9c9" /><path d="M7 2l13 1-.8 5L12 18 2 16z" fill="#a7dbe5" /><path d="M19.500 6l1 15.500-5 .5z" fill="#e2f4f7" /><path d="M7 2.200l13 1" stroke="#ddd" strokeWidth="1.500" strokeDasharray="1 1" /></svg></TaskBtn>
      </div>
      <div className="flex-1" />
      <div className="relative mr-[28px] flex h-5 w-[49px] items-center justify-center border-2 border-white bg-gradient-to-r from-[#1fa653] from-40% to-black to-40% text-[13px] leading-none after:absolute after:-right-1 after:h-2 after:w-[2px] after:bg-white">40%</div>
      <svg viewBox="0 0 12 8" className="h-2 w-3" fill="none" stroke="#fff" strokeWidth="1.300"><path d="M.5 7L6 1.500 11.500 7" /></svg>
      <svg viewBox="0 0 14 14" className="ml-[13px] h-[14px] w-[14px]" fill="none" stroke="#fff"><path d="M1 12.500A11 11 0 0 1 12 1.500" opacity=".5" /><path d="M4 12.500A8 8 0 0 1 12 4.500M7 12.500A5 5 0 0 1 12 7.500" /><circle cx="11" cy="11.500" r="1.500" fill="#fff" stroke="none" /></svg>
      <svg viewBox="0 0 15 10" className="ml-2 h-[10px] w-[15px]" fill="none" stroke="#fff" strokeWidth="1.200"><path d="M.7.700h12v8.600H.7zM14.300 3v4" /><path d="M2.500 2.500h3v5h-3z" fill="#fff" stroke="none" /></svg>
      <svg viewBox="0 0 16 14" className="ml-2 h-[14px] w-4" fill="none" stroke="#fff"><path d="M.5 4.500h3L7 1.500v11l-3.500-3h-3z" /><path d="M9 4.500q1.500 2.500 0 5M11 3q2.500 4 0 8" /><path d="M13 1.500q3.500 5.500 0 11" opacity=".5" /></svg>
      <div className="ml-1 flex w-[36px] flex-col items-center leading-[17px]"><span>ENG</span><span>IN</span></div>
      <div className="ml-1 flex w-[56px] flex-col items-center whitespace-nowrap leading-[17px]"><span>9:50 AM</span><span>6/24/2021</span></div>
      <svg viewBox="0 0 16 16" className="ml-4 mr-5 h-4 w-4" fill="none" stroke="#fff" strokeWidth="1.200"><path d="M.6.600h14.800v11.800H10L8 15l-2-2.600H.6z" /></svg>
      <div className="mr-1 h-full w-px bg-[#6b6668]" />
    </footer>
  );
}

export default function App() {
  return (
    <div className="flex h-screen flex-col overflow-hidden font-['Open_Sans','Noto_Sans',sans-serif]">
      <TabStrip />
      <Toolbar />
      <Bookmarks />
      <Meeting />
      <Taskbar />
    </div>
  );
}
